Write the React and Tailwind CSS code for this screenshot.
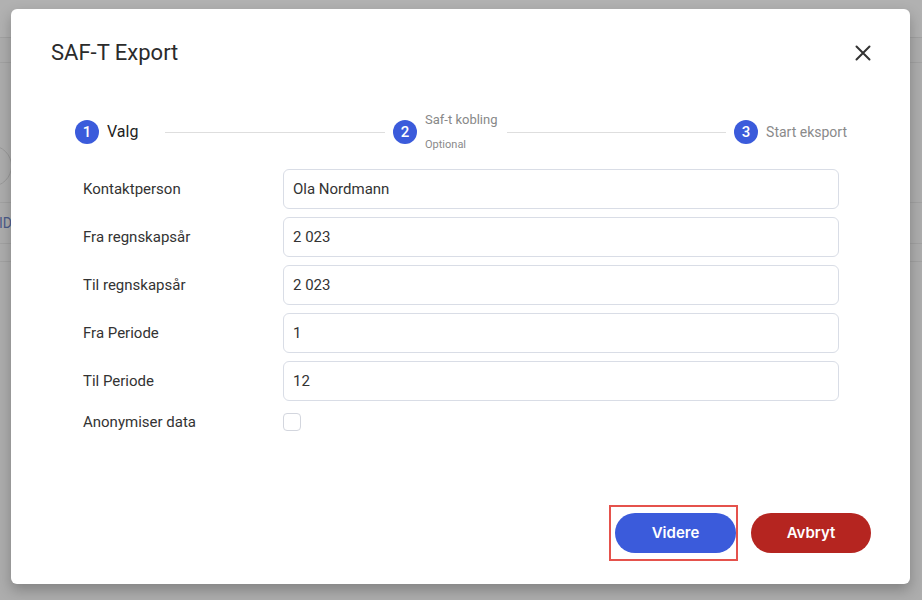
import React from 'react';

const font = { fontFamily: 'Roboto, "Noto Sans", sans-serif' };

const fields = [
  { label: 'Kontaktperson', value: 'Ola Nordmann' },
  { label: 'Fra regnskapsår', value: '2 023' },
  { label: 'Til regnskapsår', value: '2 023' },
  { label: 'Fra Periode', value: '1' },
  { label: 'Til Periode', value: '12' },
];

const StepDot = ({ n }) => (
  <div className="w-6 h-6 rounded-full bg-[#3b5bdb] text-white text-[15px] font-medium flex items-center justify-center shrink-0">
    {n}
  </div>
);

// faint page lying under the overlay
const BackgroundPage = () => (
  <div className="absolute inset-0 bg-[#adadad]">
    <div className="h-[38px] border-b border-[#a2a2a2] bg-[#b1b1b1]" />
    <div className="h-[25px] border-b border-[#a2a2a2]" />
    <div className="flex pt-[82px]">
      <div className="w-[42px] h-[42px] rounded-full border border-[#999] -ml-[30px]" />
    </div>
    <div className="h-[16px] border-b border-[#a2a2a2]" />
    <div className="h-[41px] border-b border-[#a2a2a2] flex items-center text-[14px] text-[#4a5a8a] -ml-[1px]">ID</div>
    <div className="h-[18px] border-b border-[#a2a2a2]" />
  </div>
);

export default function App() {
  return (
    <div className="relative w-[922px] h-[600px] overflow-hidden" style={font}>
      <BackgroundPage />

      <div className="absolute left-[11px] top-[9px] w-[899px] h-[575px] bg-white rounded-[6px] shadow-[0_6px_14px_rgba(0,0,0,0.25)] flex flex-col">
        {/* header */}
        <div className="flex items-center justify-between pl-10 pr-[38px] pt-[30px]">
          <h2 className="text-[22px] leading-7 text-[#2b2b2b]">SAF-T Export</h2>
          <svg width="18" height="18" viewBox="0 0 18 18" className="text-[#333]">
            <path d="M2.5 2.5 L15.5 15.5 M15.5 2.5 L2.5 15.5" stroke="currentColor" strokeWidth="2" strokeLinecap="round" />
          </svg>
        </div>

        {/* stepper */}
        <div className="flex items-center pl-16 pr-[63px] mt-[47px] h-9">
          <StepDot n="1" />
          <span className="ml-2 text-[16px] text-[#222]">Valg</span>
          <div className="flex-1 h-px bg-[#dedede] ml-[27px] mr-2" />
          <StepDot n="2" />
          <div className="ml-2 flex flex-col">
            <span className="text-[13px] leading-[18px] text-[#888]">Saf-t kobling</span>
            <span className="text-[11px] leading-4 mt-2 text-[#8a8a8a]">Optional</span>
          </div>
          <div className="flex-1 h-px bg-[#dedede] ml-[9px] mr-2" />
          <StepDot n="3" />
          <span className="ml-2 text-[14px] text-[#8a8a8a]">Start eksport</span>
        </div>

        {/* form */}
        <div className="flex flex-col gap-2 pl-[72px] pr-[71px] mt-[19px]">
          {fields.map((f) => (
            <div key={f.label} className="flex items-center">
              <label className="w-[200px] text-[15px] text-[#333]">{f.label}</label>
              <div className="flex-1 h-10 rounded-[6px] border border-[#d9dde6] flex items-center px-[9px] text-[15px] text-[#333]">
                {f.value}
              </div>
            </div>
          ))}
          <div className="flex items-center mt-[2px] h-[22px]">
            <label className="w-[200px] text-[15px] text-[#333]">Anonymiser data</label>
            <div className="w-[18px] h-[18px] rounded-[4px] border border-[#d3d6de] bg-white" />
          </div>
        </div>

        {/* footer */}
        <div className="mt-auto flex justify-end gap-[15px] pr-[39px] pb-[31px]">
          <div className="relative">
            <div className="absolute -left-[6px] -right-[2px] -top-2 -bottom-2 border-2 border-[#e5524c]" />
            <button
              className="relative w-[121px] h-10 rounded-full bg-[#3b5bdb] text-white text-[15px] font-semibold"
              style={{ fontFamily: 'Inter, sans-serif' }}
            >
              Videre
            </button>
          </div>
          <button
            className="w-[120px] h-10 rounded-full bg-[#b52520] text-white text-[15px] font-semibold"
            style={{ fontFamily: 'Inter, sans-serif' }}
          >
            Avbryt
          </button>
        </div>
      </div>
    </div>
  );
}
